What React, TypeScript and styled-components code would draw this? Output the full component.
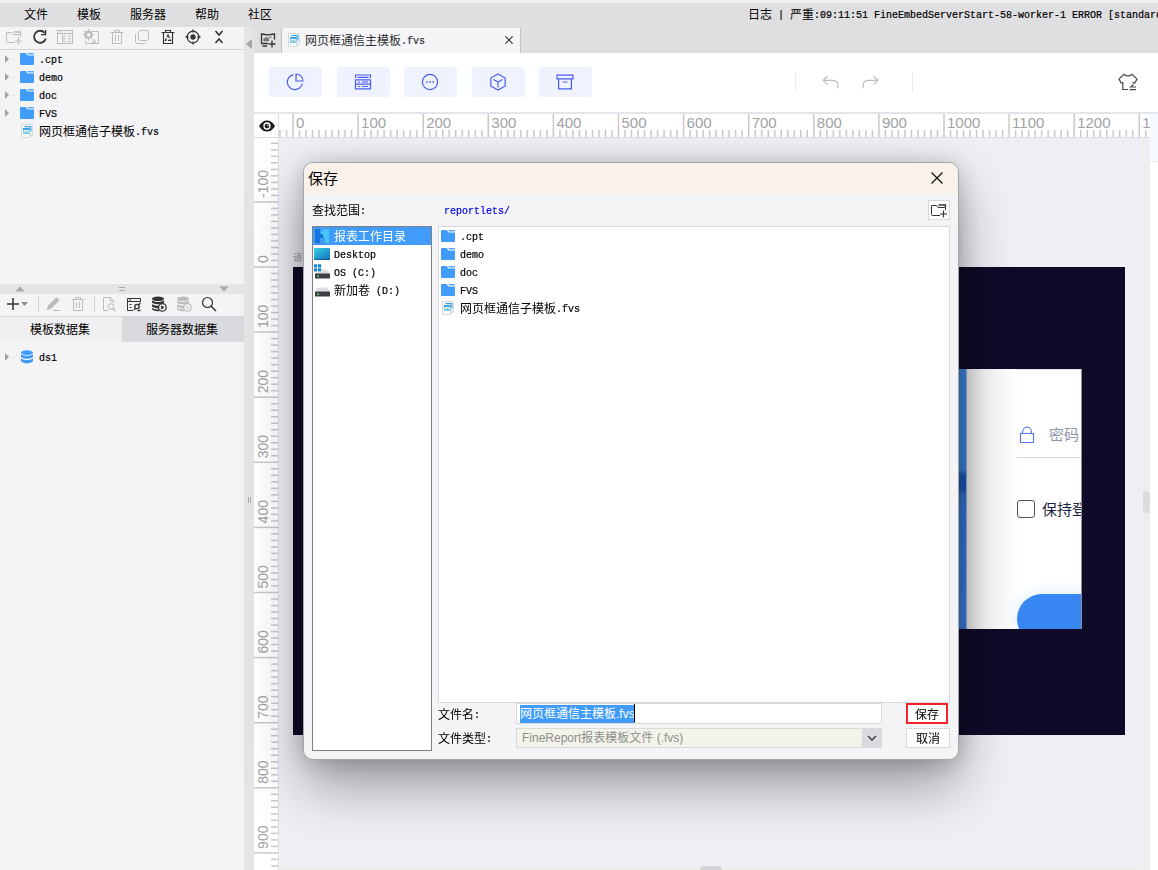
import React, { useEffect, useRef, useState } from "react";
import styled, { createGlobalStyle } from "styled-components";

const sans = `"Liberation Sans", "Noto Sans CJK SC", sans-serif`;

const Global = createGlobalStyle`
  *, *::before, *::after { box-sizing: border-box; }
  html, body, #root { height: 100%; }
  body { margin: 0; overflow: hidden; background: #dfdfe1; font: 12px/18px "Noto Sans CJK SC", sans-serif; color: #000; }
  button { border: 0; padding: 0; margin: 0; background: none; font: inherit; color: inherit; cursor: pointer; }
  ul { list-style: none; margin: 0; padding: 0; }
  svg { display: block; flex: none; }
`;

/* ---------- text ---------- */
const Latin = styled.span`
  font: 10px/12px "Liberation Mono", monospace;
  -webkit-text-stroke: 0.2px currentColor;
  vertical-align: 1px;
  white-space: pre;
`;
const Line = styled.span`white-space: pre;`;

/** Sets Latin runs in the half-width face and CJK runs in the full-width one. */
function Mixed({ children }: { children: string }) {
  const runs = children.match(/[\x20-\x7e]+|[^\x20-\x7e]+/g) ?? [];
  return (
    <Line>
      {runs.map((r, i) => (/^[\x20-\x7e]/.test(r) ? <Latin key={i}>{r}</Latin> : r))}
    </Line>
  );
}

/* ---------- icons ---------- */
const DARK = "#333338";
const PALE = "#bcbcbf";

const Folder = () => (
  <svg width="14" height="14" viewBox="0 0 14 14">
    <path d="M0 2Q0 1 1 1H5.6L7.6 3.4H14V12Q14 13 13 13H1Q0 13 0 12Z" fill="#419bf9" />
    <path d="M7 1H13Q14 1 14 2V2.4H8.2Z" fill="#5aa9fa" />
  </svg>
);
const FvsFile = () => (
  <svg width="14" height="14" viewBox="0 0 14 14">
    <path d="M1.5.5H12.5V10L9.5 13.5H1.5Z" fill="#f7fafc" stroke="#d3d9df" />
    <path d="M9.5 13.5V10.2H12.5Z" fill="#c8cfd6" />
    <path d="M4.5 2.7H10.8V7.6" stroke="#3aa0e8" strokeWidth="1.2" fill="none" />
    <rect x="3.3" y="4.6" width="6" height="5" fill="#e8f6ff" stroke="#6cb8ee" strokeWidth=".8" />
    <rect x="3" y="4.2" width="6.6" height="1.8" fill="#3aa0e8" />
    <path d="M4.8 9V7.6M6.3 9V7M7.8 9V7.6" stroke="#4bb58a" strokeWidth=".9" />
  </svg>
);
const Database = () => (
  <svg width="14" height="14" viewBox="0 0 14 14">
    <ellipse cx="7" cy="2.6" rx="6" ry="2.4" fill="#419bf9" />
    <path d="M1 4.2Q7 7.4 13 4.2V7.2Q7 10.4 1 7.2Z" fill="#419bf9" />
    <path d="M1 8.6Q7 11.8 13 8.6V11.6Q7 15.4 1 11.6Z" fill="#419bf9" />
  </svg>
);
const NewFolder = ({ c = PALE }: { c?: string }) => (
  <svg width="16" height="16" viewBox="0 0 16 16" fill="none" stroke={c}>
    <path d="M9 13.5H1.5Q.5 13.5 .5 12.5V3.5H5.5L7 5.5H14.5V8" />
    <path d="M7.5 3H14.5V5" strokeWidth="1.4" />
    <path d="M12.5 8.5V15.5M9 12H16" strokeWidth="1.2" />
  </svg>
);
const Refresh = () => (
  <svg width="16" height="16" viewBox="0 0 16 16" fill="none" stroke={DARK} strokeWidth="1.8">
    <path d="M12.6 3.8A6 6 0 1 0 13.8 9.6" />
    <path d="M13.6 1V5.6H9" strokeWidth="1.4" />
  </svg>
);
const RenameIcon = () => (
  <svg width="16" height="16" viewBox="0 0 16 16" fill="none" stroke={PALE}>
    <rect x=".5" y="1.5" width="15" height="13" />
    <path d="M.5 4.5H15.5M3 2.8H4.5" strokeWidth="1.2" />
    <path d="M5.5 6.5V12.5H9M5.5 7H9M5.5 9.8H9M11 7H14M11 9.8H14M11 12.5H14" />
  </svg>
);
const GearDoc = () => (
  <svg width="16" height="16" viewBox="0 0 16 16" fill="none" stroke={PALE}>
    <circle cx="5.5" cy="5.8" r="3" strokeWidth="2.2" />
    <path d="M5.5 0V11.6M0 5.8H11M1.6 1.9L9.4 9.7M9.4 1.9L1.6 9.7" strokeWidth="1.2" strokeDasharray="2 7.6" />
    <path d="M10 2.5H15.5V14.5H2.5V12" />
    <path d="M9 10.5L12 13.5M12 10.5V13.5H9" />
  </svg>
);
const Trash = () => (
  <svg width="16" height="16" viewBox="0 0 16 16" fill="none" stroke={PALE}>
    <path d="M1.5 3.5H14.5M5.5 3.5V1.5H10.5V3.5M3.5 3.5V14.5H12.5V3.5M6.5 6V12M9.5 6V12" />
  </svg>
);
const Copy = () => (
  <svg width="16" height="16" viewBox="0 0 16 16" fill="none" stroke={PALE}>
    <rect x="4.5" y="1.5" width="10" height="10" rx="2" />
    <path d="M2.5 4.5Q1.5 5 1.5 6V12.5Q1.5 14.5 3.5 14.5H9.5Q11 14.5 11.5 13.5" />
  </svg>
);
const Recycle = () => (
  <svg width="16" height="16" viewBox="0 0 16 16" fill="none" stroke={DARK} strokeWidth="1.2">
    <path d="M1.5 3.5H14.5M5.5 3.5V1.5H10.5V3.5M3.5 3.5V14.5H12.5V3.5" />
    <path d="M8 6L10.6 11.4H5.4Z" strokeDasharray="3.6 1.4" />
  </svg>
);
const Target = () => (
  <svg width="16" height="16" viewBox="0 0 16 16" fill="none" stroke={DARK} strokeWidth="1.3">
    <circle cx="8" cy="8" r="5.8" />
    <circle cx="8" cy="8" r="2" fill={DARK} />
    <path d="M8 .5V3.6M8 12.4V15.5M.5 8H3.6M12.4 8H15.5" />
  </svg>
);
const Collapse = () => (
  <svg width="16" height="16" viewBox="0 0 16 16" fill="none" stroke={DARK} strokeWidth="1.6">
    <path d="M4.5 2L8 6L11.5 2M4.5 14L8 10L11.5 14" />
  </svg>
);
const PlusMenu = () => (
  <svg width="24" height="16" viewBox="0 0 24 16">
    <path d="M7 2V14M1 8H13" stroke={DARK} strokeWidth="1.6" />
    <path d="M15 6H22L18.5 10Z" fill="#8d8d91" />
  </svg>
);
const Pencil = () => (
  <svg width="16" height="16" viewBox="0 0 16 16">
    <path d="M1.5 14.5L3 9.5L10.5 2Q11.5 1 12.5 2L13.8 3.2Q14.6 4 13.8 5L6.2 12.6Z" fill={PALE} />
    <path d="M8 14.5H15" stroke={PALE} />
  </svg>
);
const DocSearch = () => (
  <svg width="16" height="16" viewBox="0 0 16 16" fill="none" stroke={PALE}>
    <path d="M7 14.5H2.5V1.5H9L12.5 5V7M9 1.5V5H12.5" />
    <circle cx="10" cy="10.5" r="2.8" />
    <path d="M12 12.5L14.5 15" strokeWidth="1.4" />
  </svg>
);
const FormLink = () => (
  <svg width="16" height="16" viewBox="0 0 16 16" fill="none" stroke={DARK}>
    <path d="M7 14.5H1.5V2.5H14.5V6M1.5 5.5H14.5M3.5 8.5H5.5M3.5 11.5H5.5" />
    <path d="M3 3.9H5" />
    <circle cx="11" cy="10.5" r="2.2" strokeWidth="1.3" />
    <path d="M8 14L9.5 12.2M12.6 8.8L14.5 7M11.5 14.5H14.5" strokeWidth="1.3" />
  </svg>
);
const DbBadge = ({ c, mark }: { c: string; mark: string }) => (
  <svg width="16" height="16" viewBox="0 0 16 16">
    <ellipse cx="7" cy="2.8" rx="6" ry="2.3" fill={c} />
    <path d="M1 4.4Q7 7.4 13 4.4V6.8Q7 9.8 1 6.8Z" fill={c} />
    <path d="M1 8.2Q5 10.2 9 9.6L8 12.6Q4 12.6 1 10.8Z" fill={c} />
    <path d="M1 12Q4 13.7 7.6 13.6L8.5 15.2Q3.4 15.6 1 13.6Z" fill={c} />
    <circle cx="11.4" cy="11.4" r="3.8" fill="#f4f4f7" stroke={c} strokeWidth="1.3" />
    <path d={mark} fill={c} stroke={c} strokeWidth=".8" />
  </svg>
);
const Search = () => (
  <svg width="16" height="16" viewBox="0 0 16 16" fill="none" stroke={DARK} strokeWidth="1.2">
    <circle cx="6.5" cy="6.5" r="5" />
    <path d="M10.2 10.2L15 15" strokeWidth="1.5" />
  </svg>
);
const NewBoard = () => (
  <svg width="16" height="16" viewBox="0 0 16 16" fill="none" stroke={DARK} strokeWidth="1.3">
    <path d="M8 11.5H1.5V2Q8 3.6 14.5 2V7.5" />
    <path d="M4 8.5V7L7 5.5L8.5 7.5V8.5ZM9 6L11.5 5" fill="#77777b" stroke="#77777b" />
    <path d="M2.5 14H7M12 8.5V15.5M8.5 12H15.5" />
  </svg>
);
const Eye = () => (
  <svg width="16" height="12" viewBox="0 0 16 12">
    <path d="M0 6Q3 .4 8 .4T16 6Q13 11.6 8 11.6T0 6Z" fill="#1d1d20" />
    <circle cx="8" cy="6" r="3" fill="#1d1d20" stroke="#fff" strokeWidth="1.3" />
    <circle cx="9" cy="5.2" r=".8" fill="#fff" />
  </svg>
);
const BLUE = "#4a5cf0";
const ToolIcon = ({ children }: { children: React.ReactNode }) => (
  <svg width="18" height="18" viewBox="0 0 18 18" fill="none" stroke={BLUE} strokeWidth="1.2">{children}</svg>
);
const Undo = ({ flip }: { flip?: boolean }) => (
  <svg width="17" height="16" viewBox="0 0 17 16" fill="none" stroke="#bdbdc1" strokeWidth="1.2">
    <g transform={flip ? "matrix(-1 0 0 1 17 0)" : undefined}>
      <path d="M5.5 2L1.2 6.3L5.5 10.6M1.2 6.3H10Q15.8 6.3 15.8 11V14.5" />
    </g>
  </svg>
);
const Shirt = () => (
  <svg width="20" height="18" viewBox="0 0 20 18" fill="none" stroke="#4a4a4e" strokeWidth="1.2">
    <path d="M10 16.5H4.8V9.5L3.2 10L1 6L6 1.2Q10 4.6 14 1.2L19 6L16.8 10L15.2 9.5V10.5" />
    <path d="M11.5 14H18M11.5 16.6H18M15.5 11.5L13 13.5" />
  </svg>
);
const WorkDir = () => (
  <svg width="16" height="16" viewBox="0 0 16 16">
    <path d="M1 1H6V6H9V10H6V15H1Z" fill="#1673e0" />
    <path d="M7 4L11 1H15V15H11V9H9V6H7Z" fill="#45c8f7" />
  </svg>
);
const Desktop = () => (
  <svg width="16" height="14" viewBox="0 0 16 14">
    <defs>
      <linearGradient id="desk" x1="0" y1="0" x2="1" y2="1">
        <stop offset="0" stopColor="#37d3e0" /><stop offset="1" stopColor="#0f6fc0" />
      </linearGradient>
    </defs>
    <rect y="1" width="16" height="12" rx="1" fill="url(#desk)" />
    <path d="M0 12.3H16" stroke="#0d4d86" strokeWidth=".8" />
  </svg>
);
const Drive = ({ windows }: { windows?: boolean }) => (
  <svg width="16" height="16" viewBox="0 0 16 16">
    <path d="M3.5 5.5H13.5L16 10H1Z" fill="#dcdee2" />
    <rect x="1" y="9.5" width="15" height="5" rx=".5" fill="#3d3f43" />
    <rect x="3" y="11.5" width="2" height="1.4" fill="#4fe07a" />
    {windows && (
      <>
        <rect width="8" height="8" fill="#fff" />
        <path d="M0 .3H3.2V3.5H0ZM4 .3H7.2V3.5H4ZM0 4.3H3.2V7.5H0ZM4 4.3H7.2V7.5H4Z" fill="#1583d8" />
      </>
    )}
  </svg>
);
const Cross = ({ size, c, w }: { size: number; c: string; w: number }) => (
  <svg width={size} height={size} viewBox="0 0 12 12" stroke={c} strokeWidth={w}>
    <path d="M.5.5L11.5 11.5M11.5.5L.5 11.5" />
  </svg>
);
const Lock = () => (
  <svg width="16" height="18" viewBox="0 0 16 18" fill="none" stroke="#5b78f0" strokeWidth="1.2">
    <path d="M1.5 7.5H14.5V16.5H1.5ZM3.6 7.5V6A4.4 4.8 0 0 1 12.4 6V7.5" />
  </svg>
);

/* ---------- shell ---------- */
const Shell = styled.div`
  height: 100vh; display: flex; flex-direction: column;
`;
const MenuBar = styled.header`
  flex: none; height: 27px; border-top: 3px solid #f1f1f1; background: #dfdfe1;
  display: flex; align-items: center; padding: 0 0 2px 24px; overflow: hidden;
`;
const MenuNav = styled.nav`display: flex; gap: 29px; flex: none;`;
const LogLine = styled.div`
  margin-left: auto; flex: 0 0 410px; overflow: hidden; white-space: nowrap;
`;
const Workspace = styled.div`flex: 1; min-height: 0; display: flex;`;
const Side = styled.aside`
  flex: 0 0 244px; display: flex; flex-direction: column; background: #f4f4f7;
`;
const SideBar = styled.div<{ $spread?: boolean }>`
  flex: none; height: 23px; display: flex; align-items: center;
  justify-content: ${(p) => (p.$spread ? "space-between" : "flex-start")};
  gap: ${(p) => (p.$spread ? 0 : 9)}px;
  padding: 0 17px 2px 6px;
  border-bottom: 1px solid #d6d6da;
`;
const Rule = styled.span`width: 1px; height: 16px; margin: 0 -3px 0 -1px; background: #d6d6da;`;
const Tree = styled.ul<{ $h?: number; $top?: number }>`
  flex: ${(p) => (p.$h ? `0 0 ${p.$h}px` : "1")}; padding-top: ${(p) => p.$top ?? 0}px; overflow: hidden;
`;
const TreeRow = styled.li`
  height: 18px; display: flex; align-items: center; padding-left: 5px;
`;
const Twist = styled.span`
  width: 15px; display: flex; align-items: center;
  &::after { content: ""; width: 5px; height: 1px; margin-left: 2px; background: #e9e9ee; }
`;
const Caret = styled.i<{ $hide?: boolean }>`
  border: 4px solid transparent; border-left-color: #a2a2a6; border-right: 0;
  visibility: ${(p) => (p.$hide ? "hidden" : "visible")};
`;
const Label = styled.span`margin-left: 5px;`;
const Splitter = styled.div`
  flex: 0 0 10px; background: #e5e5e7; display: flex; align-items: center;
  justify-content: space-between; padding: 0 15px;
`;
const SplitterMark = styled.svg.attrs({ width: 10, height: 6, viewBox: "0 0 10 6" })`fill: #aaaaae;`;
const DataTabs = styled.div`flex: none; height: 25px; display: flex;`;
const DataTab = styled.button<{ $active?: boolean }>`
  flex: 1; padding: 0 2px 2px 0; background: ${(p) => (p.$active ? "#d8dadd" : "#f0f0f3")};
`;
const Divider = styled.div`
  flex: 0 0 10px; background: #e5e5e7; display: flex; flex-direction: column;
  align-items: center; padding-top: 12px; gap: 448px; overflow: hidden;
`;
const Grip = styled.span`
  flex: none; width: 3px; height: 6px; border: solid #aaaaae; border-width: 0 1px;
`;
const Editor = styled.main`
  flex: 1; min-width: 0; display: flex; flex-direction: column; background: #fff;
`;
const FileTabs = styled.div`flex: none; height: 26px; display: flex; background: #dfdfe1;`;
const AddTab = styled.button`flex: 0 0 27px; display: flex; align-items: center; justify-content: center;`;
const FileTab = styled.div`
  width: 240px; margin-top: 1px; padding: 0 7px 2px 5px; display: flex; align-items: center; gap: 4px;
  background: #f5f5f7; border: solid #c3c3c7; border-width: 0 1px; color: #303034;
  button { margin-left: auto; }
`;
const Tools = styled.div`
  flex: none; height: 61px; display: flex; align-items: center;
  padding: 0 20px 2px 15px; border-bottom: 2px solid #e4e5ec;
`;
const ToolGroup = styled.div`width: 323px; display: flex; justify-content: space-between;`;
const ToolButton = styled.button`
  width: 53px; height: 30px; border-radius: 3px; background: #eff3ff; padding-right: 1px;
  display: flex; align-items: center; justify-content: center;
`;
const History = styled.div`
  width: 118px; height: 20px; margin-left: auto; margin-right: 205px; padding-right: 8px;
  display: flex; align-items: center; justify-content: center; gap: 23px;
  border: solid #ececf0; border-width: 0 1px;
`;
const Board = styled.div`
  flex: 1; min-height: 0; display: grid; position: relative;
  grid-template: 24px 1fr / 25px 1fr 8px 8px;
`;
const Corner = styled.button`
  background: #fff; border-right: 1px solid #dcdde6; border-bottom: 1px solid #dcdde6;
  display: flex; align-items: center; justify-content: center; padding-left: 1px;
`;
const RulerX = styled.div`
  grid-column: 2 / 4; overflow: hidden; border-bottom: 1px solid #dcdde6; background: #fff;
`;
const RulerY = styled.div`
  overflow: hidden; border-right: 1px solid #dcdde6; background: #fff; min-height: 0;
`;
const RulerText = styled.text<{ $size: number }>`
  font: ${(p) => p.$size}px ${sans}; fill: #a2a2a4;
`;
const Rail = styled.div`
  grid-area: 1 / 4 / 3 / 5; background: linear-gradient(#f4f9ff 47px, #e6ebf2 47px 48px, #fff 48px);
`;
const Canvas = styled.div`
  position: relative; overflow: hidden; background: #eef0f5; min-height: 0;
`;
const ScrollY = styled.div`
  background: #eeeeee; display: flex; align-items: center; justify-content: center; padding-bottom: 4px;
  &::after { content: ""; width: 7px; height: 22px; border-radius: 4px; background: #dcdcdd; }
`;
const ScrollX = styled.div`
  position: absolute; left: 0; right: 0; bottom: 0; height: 4px; background: #eeeeee;
  display: flex; justify-content: center;
  &::after { content: ""; width: 22px; height: 4px; border-radius: 4px 4px 0 0; background: #d5d5d7; }
`;

/* ---------- the report on the canvas ---------- */
const Stage = styled.div`
  position: absolute; left: 14px; top: 129px; width: 832px; height: 468px; background: #0f0a28;
`;
const StageNote = styled.span`
  position: absolute; left: 14px; top: 111px; font-size: 9px; color: #9a9ba3;
`;
const Card = styled.div`
  position: absolute; left: 374px; top: 102px; width: 415px; height: 260px;
  overflow: hidden; display: flex; background: #fff; border-right: 1px solid #8f8da0;
`;
const Cover = styled.div`
  flex: 0 0 300px; border-right: 1px solid #8fb4ee;
  background: linear-gradient(#3c82dc 0 100px, #1c56b4 107px 120px, #3470cc 126px, #3476d6 150px, #3c7cda);
`;
const Fold = styled.div`flex: 0 0 49px; background: linear-gradient(90deg, #e4e4e4, #f6f6f6 35%, #fff);`;
const Login = styled.div`
  flex: 0 0 280px; display: flex; flex-direction: column; border-top: 1px solid #e2e2ee;
  font: 15px/20px "Noto Sans CJK SC", sans-serif; white-space: nowrap;
`;
const Secret = styled.label`
  flex: none; height: 88px; padding: 54px 0 0 3px; display: flex; gap: 14px; border-bottom: 1px solid #dcdde4;
  input { border: 0; padding: 0; height: 20px; font: inherit; background: none; outline: 0; }
  input::placeholder { color: #8f95a6; }
  svg { margin-top: 2px; }
`;
const Keep = styled.label`
  flex: none; margin-top: 41px; display: flex; align-items: center; gap: 7px; color: #1b2440;
  input {
    appearance: none; margin: 0 0 0 1px; width: 18px; height: 18px;
    border: 1px solid #4b5468; border-radius: 3px; background: #fff;
  }
`;
const LoginButton = styled.button`
  margin: 75px 0 0 1px; height: 50px; flex: none; border-radius: 25px; background: #3786f2;
  box-shadow: 0 0 16px #d8eafc;
`;

/* ---------- dialog ---------- */
const Dialog = styled.section`
  position: fixed; left: 303px; top: 162px; width: 656px; z-index: 2;
  background: #f4f4f7; border: 1px solid #a6a6aa; border-radius: 10px; overflow: hidden;
  box-shadow: 0 26px 56px rgba(0, 0, 0, 0.36), 0 2px 24px rgba(0, 0, 0, 0.2);
`;
const TitleBar = styled.div`
  height: 31px; padding: 0 15px 2px 4px; background: #faf1eb;
  display: flex; align-items: center; justify-content: space-between;
  font-size: 15px;
`;
const DialogBody = styled.div`
  display: grid; grid-template-columns: 120px 1fr; column-gap: 6px; padding: 6px 8px 8px;
`;
const PathRow = styled.div`
  grid-column: 1 / -1; height: 20px; margin-bottom: 6px; display: flex; align-items: center;
  a { margin-left: 78px; color: #0000e6; text-decoration: none; }
`;
const IconButton = styled.button`
  margin-left: auto; width: 22px; height: 20px; border: 1px solid #d8d9de; background: #fff;
  display: flex; align-items: center; justify-content: center;
`;
const Places = styled.ul`border: 1px solid #808084; background: #fff;`;
const Place = styled.li<{ $on?: boolean }>`
  height: 18px; display: flex; align-items: center; gap: 4px; padding-left: 1px;
  background: ${(p) => (p.$on ? "#419bf9" : "transparent")};
  color: ${(p) => (p.$on ? "#fff" : "#000")};
`;
const Files = styled.ul`height: 477px; border: 1px solid #d8d9de; background: #fff;`;
const FileRow = styled.li`
  height: 18px; display: flex; align-items: center; padding-left: 2px;
`;
const FormArea = styled.div`display: flex; justify-content: space-between; padding-bottom: 3px;`;
const Form = styled.form`
  flex: none; display: grid; grid-template: 21px 20px / 78px 366px; row-gap: 4px;
  label { align-self: center; }
`;
const Field = styled.div`position: relative; display: flex;`;
const NameInput = styled.input`
  width: 100%; min-width: 0; border: 1px solid #d8d9de; border-radius: 0; outline: 0; padding: 0 3px;
  font: 12px/18px ${sans}; background: #fff; color: #000;
  &::selection { background: #419bf9; color: #fff; }
`;
const InsertMark = styled.i`
  position: absolute; left: 118px; top: 1px; width: 1px; height: 18px; background: #000;
`;
const TypeSelect = styled.select`
  appearance: none; width: 100%; border: 1px solid #d8d9de; border-radius: 0; padding: 0 5px;
  background: #f3f3ea; color: #8f8e8a; opacity: 1; font: 12px/18px ${sans};
`;
const Arrow = styled.span`
  position: absolute; right: 1px; top: 1px; bottom: 1px; width: 19px; background: #d8dadd;
  display: flex; align-items: center; justify-content: center; pointer-events: none;
`;
const Actions = styled.div`flex: none; display: flex; flex-direction: column; gap: 4px; width: 44px;`;
const Action = styled.button<{ $primary?: boolean }>`
  height: ${(p) => (p.$primary ? 21 : 20)}px; width: ${(p) => (p.$primary ? 42 : 44)}px;
  background: #fff; border: ${(p) => (p.$primary ? "2px solid #f5222d" : "1px solid #d8d9de")};
  line-height: 16px;
`;

/* ---------- rulers ---------- */
const UNIT = 65.1;
const ORIGIN_X = 14;
const ORIGIN_Y = 129;

/** Number of hundred-unit marks that fit in the window, per axis. */
function useMarks() {
  const read = () => ({
    x: Math.floor((window.innerWidth - 295) / UNIT) + 1,
    y: Math.floor((window.innerHeight - 267) / UNIT) + 2,
  });
  const [marks, setMarks] = useState(read);
  useEffect(() => {
    const update = () => setMarks(read());
    window.addEventListener("resize", update);
    return () => window.removeEventListener("resize", update);
  }, []);
  return marks;
}

const range = (from: number, count: number) => Array.from({ length: count }, (_, i) => from + i);

function HorizontalRuler({ count }: { count: number }) {
  return (
    <svg width="100%" height="23">
      {range(-1, count + 1).map((m) => {
        const x = ORIGIN_X + m * UNIT;
        return (
          <g key={m} stroke="#c9c9cb" strokeWidth="1.5">
            {range(1, 9).map((t) => <path key={t} d={`M${x + (t * UNIT) / 10} 16V23`} />)}
            <path d={`M${x} 0V23`} />
            {m >= 0 && <RulerText $size={15} x={x + 3} y="14" stroke="none">{m * 100}</RulerText>}
          </g>
        );
      })}
    </svg>
  );
}

function VerticalRuler({ count }: { count: number }) {
  return (
    <svg width="24" height="100%">
      {range(-2, count + 2).map((m) => {
        const y = ORIGIN_Y + m * UNIT;
        return (
          <g key={m} stroke="#c9c9cb" strokeWidth="1.5">
            {range(1, 9).map((t) => <path key={t} d={`M17 ${y + (t * UNIT) / 10}H24`} />)}
            <path d={`M0 ${y}H24`} />
            {y > 30 && (
              <RulerText $size={14} stroke="none" transform={`translate(14 ${y - 4}) rotate(-90)`}>
                {m * 100}
              </RulerText>
            )}
          </g>
        );
      })}
    </svg>
  );
}

const FOLDERS = [".cpt", "demo", "doc", "FVS"];
const CHILD_FILE = "网页框通信子模板.fvs";

function SaveDialog() {
  const name = useRef<HTMLInputElement>(null);
  useEffect(() => {
    name.current?.focus();
    name.current?.select();
  }, []);
  return (
    <Dialog role="dialog" aria-labelledby="save-title">
      <TitleBar>
        <span id="save-title">保存</span>
        <button aria-label="关闭"><Cross size={12} c="#111" w={1.2} /></button>
      </TitleBar>
      <DialogBody>
        <PathRow>
          <Mixed>查找范围:</Mixed>
          <a href="#reportlets"><Mixed>reportlets/</Mixed></a>
          <IconButton aria-label="新建文件夹"><NewFolder c={DARK} /></IconButton>
        </PathRow>
        <Places>
          <Place $on><WorkDir />报表工作目录</Place>
          <Place><Desktop /><Mixed>Desktop</Mixed></Place>
          <Place><Drive windows /><Mixed>OS (C:)</Mixed></Place>
          <Place><Drive /><Mixed>新加卷 (D:)</Mixed></Place>
        </Places>
        <div>
          <Files>
            {FOLDERS.map((f) => (
              <FileRow key={f}><Folder /><Label><Mixed>{f}</Mixed></Label></FileRow>
            ))}
            <FileRow><FvsFile /><Label><Mixed>{CHILD_FILE}</Mixed></Label></FileRow>
          </Files>
          <FormArea>
            <Form onSubmit={(e) => e.preventDefault()}>
              <label htmlFor="file-name"><Mixed>文件名:</Mixed></label>
              <Field>
                <NameInput ref={name} id="file-name" defaultValue="网页框通信主模板.fvs" />
                <InsertMark />
              </Field>
              <label htmlFor="file-type"><Mixed>文件类型:</Mixed></label>
              <Field>
                <TypeSelect id="file-type" disabled>
                  <option>FineReport报表模板文件 (.fvs)</option>
                </TypeSelect>
                <Arrow>
                  <svg width="10" height="6" viewBox="0 0 10 6" fill="none" stroke="#333338" strokeWidth="1.3">
                    <path d="M1 1L5 5L9 1" />
                  </svg>
                </Arrow>
              </Field>
            </Form>
            <Actions>
              <Action $primary>保存</Action>
              <Action>取消</Action>
            </Actions>
          </FormArea>
        </div>
      </DialogBody>
    </Dialog>
  );
}

export default function App() {
  const marks = useMarks();
  return (
    <Shell>
      <Global />
      <MenuBar>
        <MenuNav>
          {["文件", "模板", "服务器", "帮助", "社区"].map((m) => <button key={m}>{m}</button>)}
        </MenuNav>
        <LogLine>
          <Mixed>日志 | 严重:09:11:51 FineEmbedServerStart-58-worker-1 ERROR [standard</Mixed>
        </LogLine>
      </MenuBar>
      <Workspace>
        <Side>
          <SideBar $spread>
            <button aria-label="新建文件夹"><NewFolder /></button>
            <button aria-label="刷新"><Refresh /></button>
            <button aria-label="重命名"><RenameIcon /></button>
            <button aria-label="设置"><GearDoc /></button>
            <button aria-label="删除"><Trash /></button>
            <button aria-label="复制"><Copy /></button>
            <button aria-label="回收站"><Recycle /></button>
            <button aria-label="定位"><Target /></button>
            <button aria-label="收起"><Collapse /></button>
          </SideBar>
          <Tree $h={234}>
            {FOLDERS.map((f) => (
              <TreeRow key={f}><Twist><Caret /></Twist><Folder /><Label><Mixed>{f}</Mixed></Label></TreeRow>
            ))}
            <TreeRow><Twist><Caret $hide /></Twist><FvsFile /><Label><Mixed>{CHILD_FILE}</Mixed></Label></TreeRow>
          </Tree>
          <Splitter>
            <SplitterMark><path d="M0 5.5L5 .5L10 5.5Z" /></SplitterMark>
            <SplitterMark><path d="M2 1H8V2H2ZM2 4H8V5H2Z" /></SplitterMark>
            <SplitterMark><path d="M0 .5L5 5.5L10 .5Z" /></SplitterMark>
          </Splitter>
          <SideBar>
            <button aria-label="新增"><PlusMenu /></button>
            <Rule />
            <button aria-label="编辑"><Pencil /></button>
            <button aria-label="删除"><Trash /></button>
            <Rule />
            <button aria-label="预览"><DocSearch /></button>
            <button aria-label="连接"><FormLink /></button>
            <button aria-label="运行"><DbBadge c={DARK} mark="M10.4 9.8L13 11.4L10.4 13Z" /></button>
            <button aria-label="清除"><DbBadge c={PALE} mark="M10 10L12.8 12.8M12.8 10L10 12.8" /></button>
            <button aria-label="搜索"><Search /></button>
          </SideBar>
          <DataTabs>
            <DataTab>模板数据集</DataTab>
            <DataTab $active>服务器数据集</DataTab>
          </DataTabs>
          <Tree $top={6}>
            <TreeRow><Twist><Caret /></Twist><Database /><Label><Mixed>ds1</Mixed></Label></TreeRow>
          </Tree>
        </Side>
        <Divider>
          <svg width="6" height="10" viewBox="0 0 6 10"><path d="M6 0V10L0 5Z" fill="#a6a6aa" /></svg>
          <Grip />
        </Divider>
        <Editor>
          <FileTabs>
            <AddTab aria-label="新建"><NewBoard /></AddTab>
            <FileTab>
              <FvsFile />
              <Mixed>网页框通信主模板.fvs</Mixed>
              <button aria-label="关闭"><Cross size={8} c="#333338" w={1.8} /></button>
            </FileTab>
          </FileTabs>
          <Tools>
            <ToolGroup>
              <ToolButton aria-label="图表">
                <ToolIcon><path d="M7.5 1.6A7.6 7.6 0 1 0 16.4 10.5" /><path d="M10 1V8H17A7 7 0 0 0 10 1Z" /></ToolIcon>
              </ToolButton>
              <ToolButton aria-label="表格">
                <ToolIcon><path d="M1.5 5V2H16.5V5M1.5 6.8H16.5V11.2H1.5ZM1.5 11.2H16.5V15.8H1.5ZM3.5 4.4H14.5M4 9H6M8 9H14M4 13.5H6M8 13.5H14" /></ToolIcon>
              </ToolButton>
              <ToolButton aria-label="更多">
                <ToolIcon><circle cx="9" cy="9" r="7.6" /><path d="M5 9H6.6M8.2 9H9.8M11.4 9H13" strokeWidth="1.6" /></ToolIcon>
              </ToolButton>
              <ToolButton aria-label="三维">
                <ToolIcon><path d="M9 1L16.2 5V13L9 17L1.8 13V5ZM4.5 6.4L9 9L13.5 6.4M9 9V14.5" /></ToolIcon>
              </ToolButton>
              <ToolButton aria-label="归档">
                <ToolIcon><path d="M1 2.2H17V5.8H1ZM2.6 5.8V15.8H15.4V5.8M6.5 9H11.5" /></ToolIcon>
              </ToolButton>
            </ToolGroup>
            <History>
              <button aria-label="撤销"><Undo /></button>
              <button aria-label="重做"><Undo flip /></button>
            </History>
            <button aria-label="主题"><Shirt /></button>
          </Tools>
          <Board>
            <Corner aria-label="显示"><Eye /></Corner>
            <RulerX><HorizontalRuler count={marks.x + 1} /></RulerX>
            <Rail />
            <RulerY><VerticalRuler count={marks.y} /></RulerY>
            <Canvas>
              <StageNote>请在</StageNote>
              <Stage>
                <Card>
                  <Cover />
                  <Fold />
                  <Login>
                    <Secret><Lock /><input type="password" placeholder="密码" aria-label="密码" /></Secret>
                    <Keep><input type="checkbox" />保持登录</Keep>
                    <LoginButton aria-label="登录" />
                  </Login>
                </Card>
              </Stage>
              <ScrollX />
            </Canvas>
            <ScrollY />
          </Board>
        </Editor>
      </Workspace>
      <SaveDialog />
    </Shell>
  );
}
